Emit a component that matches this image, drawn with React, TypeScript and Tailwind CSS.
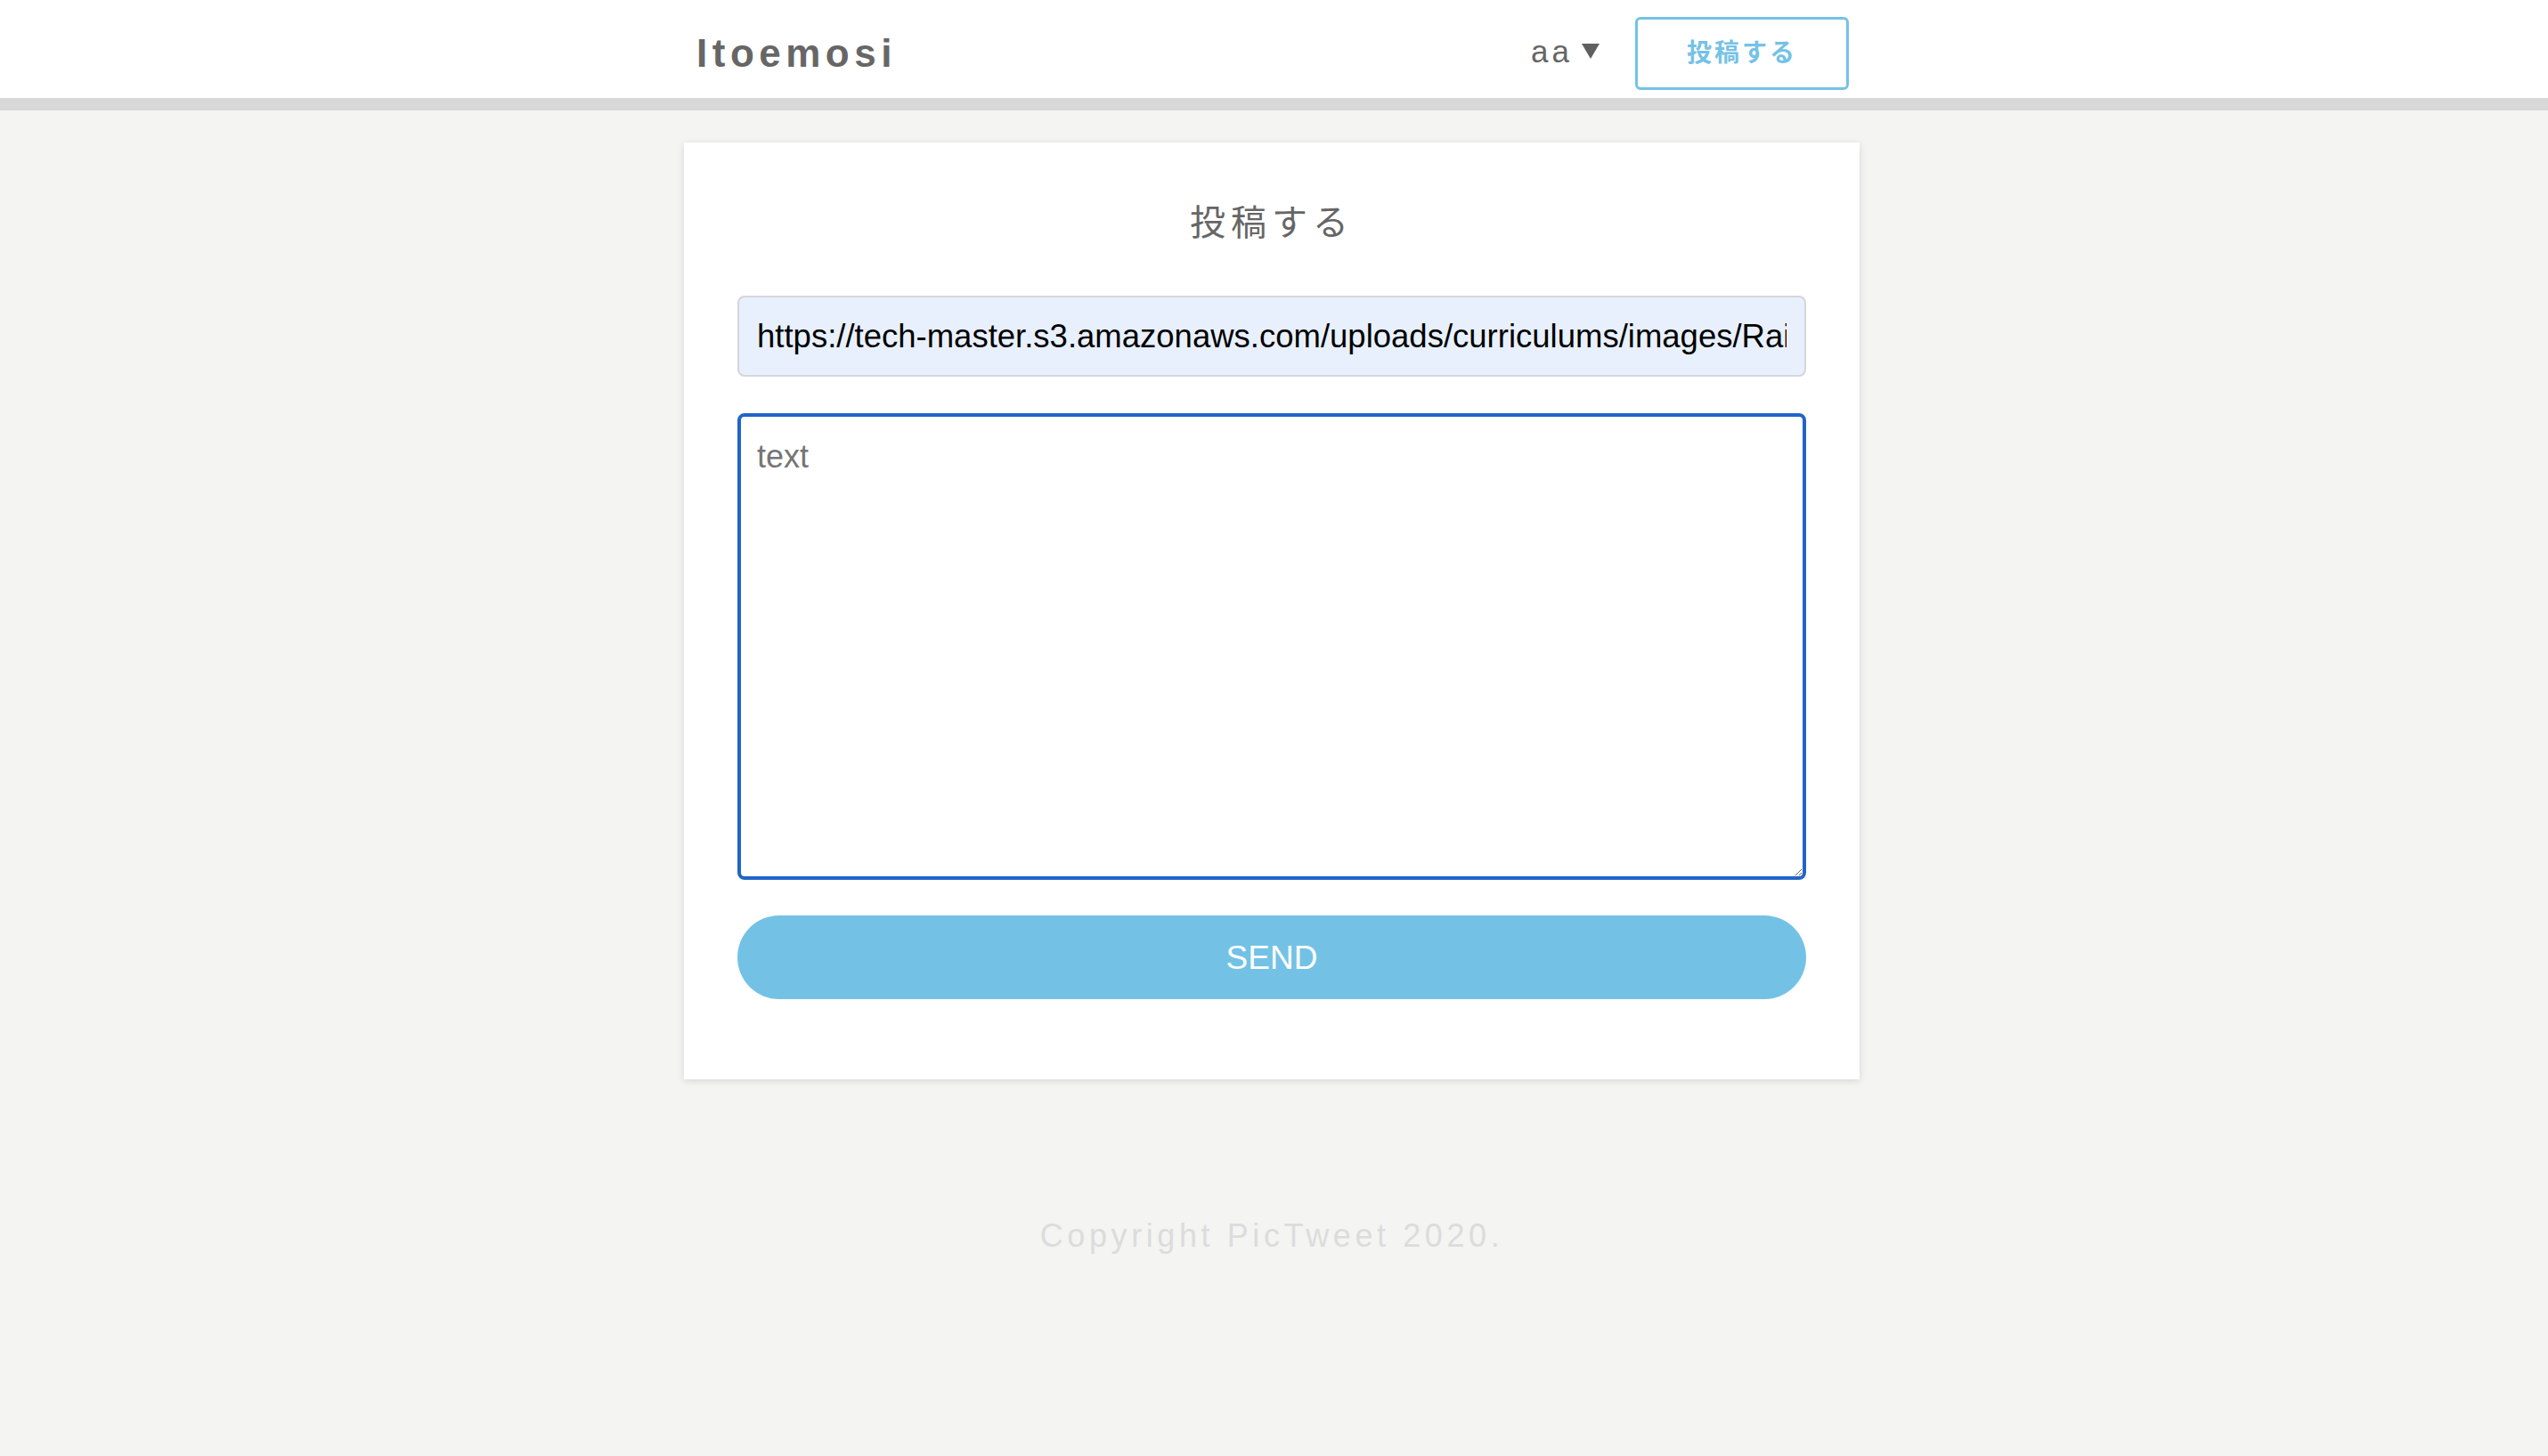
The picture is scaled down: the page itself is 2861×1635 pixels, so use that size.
import { useState } from "react";

const FONT = "font-['Liberation_Sans','Noto_Sans_CJK_JP',sans-serif]";

const Header = () => (
    <header className="bg-white border-b-[14px] border-[#d8d8d8] pr-[5px]">
        <div className="w-[1320px] mx-auto h-[110px] pt-[10px] pl-[14px] pr-[12px] flex items-center justify-between">
            <a
                href="#"
                className="text-[44px] leading-none font-semibold tracking-[5.5px] text-[#666]"
            >
                Itoemosi
            </a>
            <div className="flex items-center gap-[40px]">
                <div className="flex items-center gap-[10px] text-[#666] -mt-[6px]">
                    <span className="text-[35px] leading-none tracking-[4px]">aa</span>
                    <svg width="20" height="17" viewBox="0 0 20 17">
                        <polygon points="0,0 20,0 10,17" fill="#5f5f5f" />
                    </svg>
                </div>
                <a
                    href="#"
                    className="w-[240px] h-[82px] flex items-center justify-center border-[3px] border-[#74c2e6] rounded-[6px] text-[28px] font-bold tracking-[3px] text-[#74c2e6]"
                >
                    投稿する
                </a>
            </div>
        </div>
    </header>
);

const PostForm = () => {
    const [image, setImage] = useState(
        "https://tech-master.s3.amazonaws.com/uploads/curriculums/images/Rails1-4/sample.jpg"
    );
    const [text, setText] = useState("");

    return (
        <div className="w-[1320px] mx-auto mt-[36px] bg-white shadow-[0_2px_8px_rgba(0,0,0,0.12)] px-[60px] pt-[70px] pb-[90px]">
            <h3 className="text-center text-[40px] leading-none tracking-[6px] text-[#666] font-normal">
                投稿する
            </h3>
            <form
                className="mt-[62px] flex flex-col"
                onSubmit={(e) => e.preventDefault()}
            >
                <input
                    type="text"
                    value={image}
                    onChange={(e) => setImage(e.target.value)}
                    placeholder="Image Url"
                    className="w-full h-[91px] bg-[#e8f0fe] border-2 border-[#d4d6da] rounded-[8px] px-[20px] text-[36.5px] text-black outline-none"
                />
                <textarea
                    value={text}
                    onChange={(e) => setText(e.target.value)}
                    placeholder="text"
                    className="mt-[41px] w-full h-[524px] border-4 border-[#2264c8] rounded-[8px] px-[18px] pt-[18px] text-[36px] text-black placeholder:text-[#757575] outline-none"
                />
                <button
                    type="submit"
                    className="mt-[40px] w-full h-[94px] rounded-full bg-[#73c2e6] text-white text-[37px] leading-none"
                >
                    SEND
                </button>
            </form>
        </div>
    );
};

const App = () => {
    return (
        <div className={`min-h-screen bg-[#f4f4f2] ${FONT}`}>
            <Header />
            <main className="pr-[5px]">
                <PostForm />
                <footer className="mt-[149px] text-center">
                    <p className="text-[36px] tracking-[4.6px] text-[#dcdcdc]">
                        Copyright PicTweet 2020.
                    </p>
                </footer>
            </main>
        </div>
    );
};

export default App;
